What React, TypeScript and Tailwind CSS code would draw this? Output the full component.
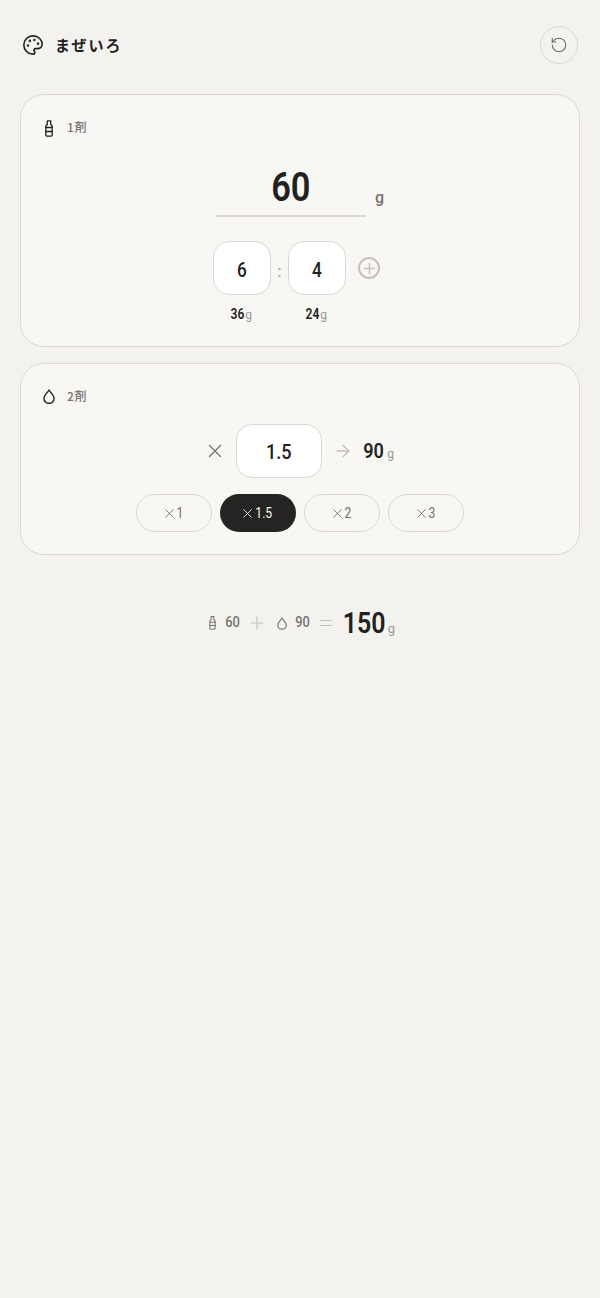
import type { ReactNode } from "react";
import { ArrowRight, Equal, Palette, Plus, RotateCcw, X } from "lucide-react";

const roboto = "font-['Roboto','Noto_Sans_CJK_JP',sans-serif]";

// digits in the reference are condensed, Roboto squeezed to about the same width
function Num({ className, children }: { className: string; children: ReactNode }) {
  return (
    <span className={`inline-flex shrink-0 scale-x-[.86] justify-center whitespace-nowrap ${roboto} ${className}`}>
      {children}
    </span>
  );
}

function Bottle({ className }: { className?: string }) {
  return (
    <svg className={className} viewBox="0 0 8 17" fill="none" stroke="currentColor" strokeWidth="1.300" strokeLinecap="round" strokeLinejoin="round">
      <path d="M2.300.8h3.400v3.700L7.200 6v8.800a1.300 1.300 0 0 1-1.300 1.300H2.100A1.300 1.300 0 0 1 .8 14.800V6l1.500-1.500z" />
      <path d="M.8 7.500h6.400M.8 11.500h6.400" />
    </svg>
  );
}

function Drop({ className }: { className?: string }) {
  return (
    <svg className={className} viewBox="0 0 12 15" fill="none" stroke="currentColor" strokeWidth="1.400" strokeLinecap="round" strokeLinejoin="round">
      <path d="M6 1C4.800 3.200.9 6.200.9 9.500a5.100 4.800 0 0 0 10.200 0C11.100 6.200 7.200 3.200 6 1z" />
    </svg>
  );
}

function RatioBox({ value, grams }: { value: string; grams: string }) {
  return (
    <div className="flex flex-col items-center">
      <div className="flex h-[54px] w-[58px] items-center justify-center rounded-[16px] border border-[#dbd8d1] bg-white pt-[3px] pr-px">
        <Num className="w-[10px] text-[20px] font-medium text-[#222120]">{value}</Num>
      </div>
      <div className="mt-[9px] flex h-[20px] items-baseline pr-px">
        <Num className="w-[13px] text-[14px] font-semibold text-[#222120]">{grams}</Num>
        <span className={`ml-[1px] text-[12px] text-[#9a9791] ${roboto}`}>g</span>
      </div>
    </div>
  );
}

function Preset({ label, active }: { label: string; active?: boolean }) {
  return (
    <button
      className={
        active
          ? "flex h-[38px] w-[76px] items-center justify-center rounded-full bg-[#252422] text-[#f8f7f4]"
          : "flex h-[38px] w-[76px] items-center justify-center rounded-full border border-[#dbd8d1] text-[#6f6c67]"
      }
    >
      <X className="-mx-[2px] h-[15px] w-[15px]" strokeWidth={1.4} />
      <Num className="ml-[1px] text-[14px]">{label}</Num>
    </button>
  );
}

export default function App() {
  return (
    <div className="min-h-[1298px] bg-[#f3f2ee] px-5 font-['Noto_Sans_CJK_JP','Noto_Sans',sans-serif]">
      <header className="flex h-[94px] items-center justify-between pb-[5px] pr-[2px] pl-[2px]">
        <div className="flex items-center gap-[11px]">
          <Palette className="h-[22px] w-[22px] text-[#222120]" strokeWidth={1.8} />
          <h1 className="text-[15px] font-bold leading-[20px] tracking-[2px] text-[#222120]">まぜいろ</h1>
        </div>
        <button className="flex h-[38px] w-[38px] items-center justify-center rounded-full border border-[#dbd8d1] pt-px text-[#6f6c67]">
          <RotateCcw className="h-[18px] w-[18px]" strokeWidth={1.5} />
        </button>
      </header>

      <section className="h-[253px] rounded-[24px] border border-[#dbd8d1] bg-[#f8f7f4] px-[24px] pt-[23px]">
        <div className="flex h-[20px] items-center gap-[14px]">
          <Bottle className="h-[17px] w-[8px] text-[#222120]" />
          <span className="-mt-[2px] text-[12px] font-medium tracking-[0.6px] text-[#77746e]">1剤</span>
        </div>
        <div className="mt-[21px] flex justify-center">
          <div className="flex h-[58px] w-[150px] items-center justify-center border-b-2 border-[#dbd8d1] pt-[2px]">
            <Num className="text-[40px] font-semibold text-[#222120]">60</Num>
          </div>
          <span className={`ml-[9px] mt-[27px] text-[16px] font-medium text-[#77746e] ${roboto}`}>g</span>
        </div>
        <div className="mt-[24px] flex justify-center pr-[6px]">
          <RatioBox value="6" grams="36" />
          <span className="flex h-[54px] w-[17px] items-center justify-center pt-[3px] text-[16px] text-[#a9a69f]">:</span>
          <RatioBox value="4" grams="24" />
          <button className="ml-[11px] flex h-[54px] w-[24px] items-center justify-center">
            <span className="flex h-[22px] w-[22px] items-center justify-center rounded-full border-2 border-[#c4c1ba] text-[#c4c1ba]">
              <Plus className="h-[17px] w-[17px] shrink-0" strokeWidth={2} />
            </span>
          </button>
        </div>
      </section>

      <section className="mt-4 h-[192px] rounded-[24px] border border-[#dbd8d1] bg-[#f8f7f4] px-[22px] pt-[22px]">
        <div className="flex h-[20px] items-center gap-[12px]">
          <Drop className="h-[15px] w-[12px] text-[#222120]" />
          <span className="text-[12px] font-medium tracking-[0.6px] text-[#77746e]">2剤</span>
        </div>
        <div className="mt-[18px] flex items-center justify-center pr-[2px]">
          <X className="h-[22px] w-[22px] text-[#77746e]" strokeWidth={1.5} />
          <div className="ml-[10px] flex h-[54px] w-[86px] items-center justify-center rounded-[16px] border border-[#dbd8d1] bg-white pt-[3px]">
            <Num className="text-[21px] font-medium text-[#222120]">1.5</Num>
          </div>
          <ArrowRight className="ml-[11px] h-[20px] w-[20px] text-[#c4c1ba]" strokeWidth={1.7} />
          <Num className="ml-[10px] mt-[1px] w-[21px] text-[21px] font-semibold text-[#222120]">90</Num>
          <span className={`ml-[3px] mt-[5px] text-[12px] text-[#9a9791] ${roboto}`}>g</span>
        </div>
        <div className="mt-[16px] flex justify-center gap-2">
          <Preset label="1" />
          <Preset label="1.5" active />
          <Preset label="2" />
          <Preset label="3" />
        </div>
      </section>

      <div className="mt-[47px] flex h-[42px] items-center justify-center pl-[4px] text-[#77746e]">
        <Bottle className="h-[14px] w-[7px]" />
        <Num className="ml-[9px] -mt-[2px] w-[15px] text-[15px] font-medium">60</Num>
        <Plus className="ml-[7px] h-[20px] w-[20px] text-[#c4c1ba]" strokeWidth={1.4} />
        <Drop className="ml-[10px] h-[13px] w-[10px]" />
        <Num className="ml-[8px] -mt-[2px] w-[15px] text-[15px] font-medium">90</Num>
        <Equal className="ml-[6px] h-[20px] w-[20px] text-[#c4c1ba]" strokeWidth={1.4} />
        <Num className="ml-[7px] mt-[2px] w-[42px] text-[29px] font-semibold text-[#222120]">150</Num>
        <span className={`ml-[3px] mt-[12px] text-[13px] text-[#9a9791] ${roboto}`}>g</span>
      </div>
    </div>
  );
}
